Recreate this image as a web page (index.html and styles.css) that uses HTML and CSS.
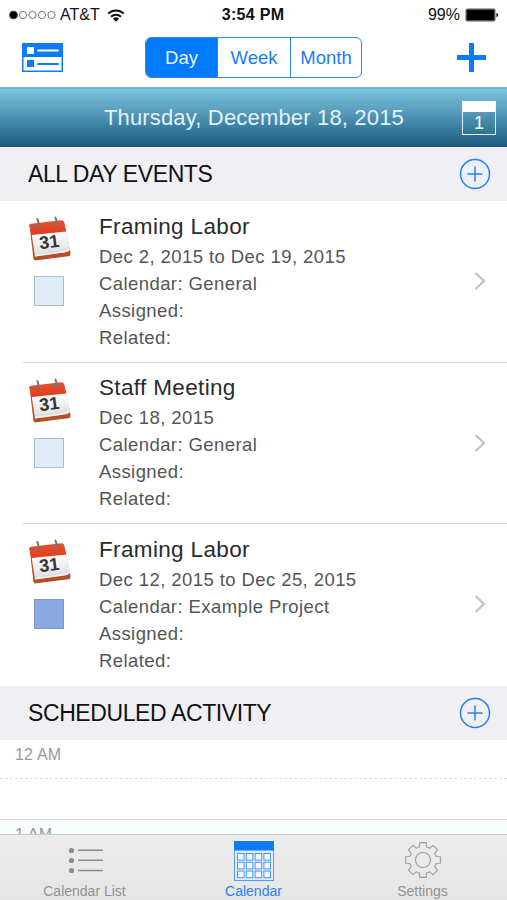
FILE: index.html
```html
<!DOCTYPE html>
<html lang="en">
  <head>
    <meta charset="utf-8">
    <title>Calendar</title>
    <link rel="stylesheet" href="styles.css">
  </head>
  <body>
    <!-- Shared icons -->
    <svg width="0" height="0" aria-hidden="true">
      <defs>
        <linearGradient id="red-top" x1="0" y1="0" x2="0" y2="1">
          <stop offset="0" stop-color="#e5522f" />
          <stop offset="1" stop-color="#dd3c1d" />
        </linearGradient>
        <linearGradient id="paper" x1="0" y1="0" x2="0" y2="1">
          <stop offset="0" stop-color="#ffffff" />
          <stop offset="1" stop-color="#dcdcdc" />
        </linearGradient>
      </defs>
      <symbol id="icon-event" viewBox="0 0 46 46">
        <path d="M1.500 9 L36 5.500 L42.500 37 L42 40 L7 44.500 L5.500 43z" fill="#b84e25" />
        <path d="M1.200 9.500 Q1.500 8 3 7.700 L33 4.300 Q35 4.200 35.500 5.500 L38.500 16 L4.500 19.500z" fill="url(#red-top)" />
        <path d="M3.700 19 L38.300 15.500 L42 33 Q41 36 36 36.500 L7 40.500z" fill="url(#paper)" />
        <path d="M7 36.500 L26 34.500 Q36 33.500 41.500 29.500 L42 34 Q40 36.200 36 36.500 L7 40.500z" fill="#eeeeee" />
        <path d="M7 37.500 Q28 36.500 41 31.500" fill="none" stroke="#c9c9c9" stroke-width="0.700" />
        <path d="M7.500 10 q4 1 3-3 l-1-4 M25.500 8 q4 1 3-3 l-1-3.500" fill="none" stroke="#777" stroke-width="2" stroke-linecap="round" />
        <text class="event-day" x="21.500" y="32" transform="rotate(-7 22 28)">31</text>
      </symbol>
      <symbol id="icon-add" viewBox="0 0 32 32">
        <circle cx="16" cy="16" r="14.500" />
        <path d="M16 8.500v15M8.500 16h15" />
      </symbol>
      <symbol id="icon-chevron" viewBox="0 0 12 20">
        <path d="M1.500 2l8.500 8-8.500 8" />
      </symbol>
    </svg>

    <div class="app">
      <!-- Status bar -->
      <div class="status-bar">
        <div class="carrier">
          <svg class="signal" width="47" height="10" viewBox="0 0 47 10">
            <circle cx="4.500" cy="5" r="4" />
            <circle cx="14" cy="5" r="3.600" />
            <circle cx="23.500" cy="5" r="3.600" />
            <circle cx="33" cy="5" r="3.600" />
            <circle cx="42.500" cy="5" r="3.600" />
          </svg>
          <span class="carrier-name">AT&amp;T</span>
          <svg class="wifi" width="18" height="13" viewBox="0 0 18 13">
            <path d="M1.200 4.600a11.200 11.200 0 0 1 15.600 0M4 7.700a7.200 7.200 0 0 1 10 0" />
            <path class="wifi-dot" d="M9 12.800l-3-3a4.300 4.300 0 0 1 6 0z" />
          </svg>
        </div>
        <div class="time">3:54 PM</div>
        <div class="battery">
          <span>99%</span>
          <svg width="34" height="14" viewBox="0 0 34 14">
            <rect x="0.500" y="0.500" width="30" height="13" rx="2" fill="#555" />
            <rect x="2" y="2" width="27" height="10" rx="1" fill="#000" />
            <path d="M31.300 5v4q2 0 2-2t-2-2z" fill="#222" />
          </svg>
        </div>
      </div>

      <!-- Toolbar -->
      <div class="toolbar">
        <svg width="41" height="30" viewBox="0 0 41 30">
          <rect width="41" height="29" fill="#0a7aff" />
          <rect x="5" y="4" width="7" height="7" fill="#fff" />
          <path d="M16 7.500h20" stroke="#fff" stroke-width="1.800" stroke-linecap="round" />
          <rect x="1.500" y="14" width="38" height="13.500" fill="#fff" />
          <rect x="5" y="17" width="7" height="7" fill="#0a7aff" />
          <path d="M16 21h20" stroke="#0a7aff" stroke-width="1.800" stroke-linecap="round" />
        </svg>
        <div class="segments">
          <div class="segment active">Day</div>
          <div class="segment">Week</div>
          <div class="segment">Month</div>
        </div>
        <svg width="29" height="29" viewBox="0 0 29 29">
          <path d="M14.500 0v29M0 14.500h29" stroke="#0a7aff" stroke-width="5" />
        </svg>
      </div>

      <!-- Current date -->
      <div class="date-bar">
        <span class="date-title">Thursday, December 18, 2015</span>
        <div class="today"><span>1</span></div>
      </div>

      <div class="section-header">
        <h2>ALL DAY EVENTS</h2>
        <svg class="add"><use href="#icon-add" /></svg>
      </div>

      <div class="events">
        <div class="event">
          <div class="event-icons">
            <svg class="event-icon"><use href="#icon-event" /></svg>
            <div class="swatch"></div>
          </div>
          <div class="event-info">
            <h3>Framing Labor</h3>
            <p>Dec 2, 2015 to Dec 19, 2015</p>
            <p>Calendar: General</p>
            <p>Assigned:</p>
            <p>Related:</p>
          </div>
          <svg class="chevron"><use href="#icon-chevron" /></svg>
        </div>
        <div class="event">
          <div class="event-icons">
            <svg class="event-icon"><use href="#icon-event" /></svg>
            <div class="swatch"></div>
          </div>
          <div class="event-info">
            <h3>Staff Meeting</h3>
            <p>Dec 18, 2015</p>
            <p>Calendar: General</p>
            <p>Assigned:</p>
            <p>Related:</p>
          </div>
          <svg class="chevron"><use href="#icon-chevron" /></svg>
        </div>
        <div class="event">
          <div class="event-icons">
            <svg class="event-icon"><use href="#icon-event" /></svg>
            <div class="swatch project"></div>
          </div>
          <div class="event-info">
            <h3>Framing Labor</h3>
            <p>Dec 12, 2015 to Dec 25, 2015</p>
            <p>Calendar: Example Project</p>
            <p>Assigned:</p>
            <p>Related:</p>
          </div>
          <svg class="chevron"><use href="#icon-chevron" /></svg>
        </div>
      </div>

      <div class="section-header">
        <h2>SCHEDULED ACTIVITY</h2>
        <svg class="add"><use href="#icon-add" /></svg>
      </div>

      <!-- Hours, cut off by the tab bar -->
      <div class="schedule">
        <div class="hour">
          <div class="half">12 AM</div>
        </div>
        <div class="hour tinted">
          <div class="half">1 AM</div>
        </div>
      </div>

      <!-- Tab bar -->
      <div class="tab-bar">
        <div class="tab">
          <svg width="36" height="40" viewBox="0 0 36 40">
            <g fill="#8c8c8c">
              <circle cx="4.500" cy="9.500" r="2.600" />
              <circle cx="4.500" cy="19.500" r="2.600" />
              <circle cx="4.500" cy="29.500" r="2.600" />
            </g>
            <path d="M11 9.200h25M11 19.200h25M11 29.400h25" stroke="#8c8c8c" stroke-width="1.500" />
          </svg>
          <span>Calendar List</span>
        </div>
        <div class="tab active">
          <svg width="40" height="40" viewBox="0 0 40 40">
            <rect x="0.500" y="0.500" width="39" height="39" fill="#e3edf8" stroke="#4d9dfa" />
            <rect width="40" height="9.500" fill="#0a7aff" />
            <g id="calendar-cells" fill="#f4f8fc" stroke="#4598fb"></g>
          </svg>
          <span>Calendar</span>
        </div>
        <div class="tab">
          <svg width="38" height="40" viewBox="-19 -19 38 40">
            <g fill="none" stroke="#9c9c9c" stroke-width="1.100" stroke-linejoin="round">
              <path id="gear" />
              <circle r="7.500" />
            </g>
          </svg>
          <span>Settings</span>
        </div>
      </div>
    </div>

    <script>
      const svgNS = "http://www.w3.org/2000/svg"

      // day cells of the calendar tab icon
      const cells = document.getElementById("calendar-cells")
      for (let row = 0; row < 3; row++) {
        for (let col = 0; col < 4; col++) {
          const cell = document.createElementNS(svgNS, "rect")
          cell.setAttribute("x", 3.5 + col * 8.8)
          cell.setAttribute("y", 12.5 + row * 8.8)
          cell.setAttribute("width", 6.6)
          cell.setAttribute("height", 6.6)
          cells.appendChild(cell)
        }
      }

      // gear outline: eight teeth, one every 45 degrees
      const tooth = [[-3.5, 13.2], [-3.2, 17.4], [3.2, 17.4], [3.5, 13.2]]
      const points = []
      for (let i = 0; i < 8; i++) {
        const angle = (i * Math.PI) / 4
        tooth.forEach(([x, y]) => {
          const px = x * Math.cos(angle) + y * Math.sin(angle)
          const py = x * Math.sin(angle) - y * Math.cos(angle)
          points.push(`${px.toFixed(2)} ${py.toFixed(2)}`)
        })
      }
      document.getElementById("gear").setAttribute("d", `M${points.join("L")}z`)
    </script>
  </body>
</html>
```
FILE: styles.css
```css
* {
  box-sizing: border-box;
}
body {
  margin: 0;
  font-family: "Liberation Sans", Arial, sans-serif;
  background: #fff;
}
h2,
h3,
p {
  margin: 0;
  font-weight: normal;
}
svg {
  display: block;
  flex-shrink: 0;
}
.app {
  display: flex;
  flex-direction: column;
  width: 507px;
  height: 900px;
  overflow: hidden;
}

/* Status bar */
.status-bar {
  display: grid;
  grid-template-columns: 1fr auto 1fr;
  align-items: center;
  height: 30px;
  padding: 0 8px 0 9px;
  font-size: 16px;
  line-height: 30px;
  color: #111;
}
.carrier {
  display: flex;
  align-items: center;
}
.signal circle {
  stroke: #555;
  stroke-width: 0.8;
  fill: none;
}
.signal circle:first-child {
  fill: #000;
}
.carrier-name {
  margin-left: 4px;
}
.wifi {
  margin-left: 7px;
  fill: none;
  stroke: #111;
  stroke-width: 2;
}
.wifi-dot {
  fill: #111;
  stroke: none;
}
.time {
  font-weight: bold;
  letter-spacing: 0.3px;
  margin-right: 2px;
}
.battery {
  display: flex;
  align-items: center;
  justify-content: flex-end;
  gap: 5px;
}

/* Toolbar */
.toolbar {
  display: flex;
  align-items: center;
  height: 57px;
  padding: 0 21px 2px 22px;
}
.segments {
  display: grid;
  grid-template-columns: 71px 73px 71px;
  height: 41px;
  margin: 0 auto 0 82px;
  border: 1.5px solid #2b87f5;
  border-radius: 6px;
  overflow: hidden;
  font-size: 18.5px;
  line-height: 40px;
  text-align: center;
  color: #1c7df5;
}
.segment + .segment {
  border-left: 1px solid #2b87f5;
}
.segment.active {
  background: #007aff;
  color: #e8f3ff;
}

/* Date */
.date-bar {
  display: flex;
  align-items: center;
  justify-content: flex-end;
  height: 60px;
  padding-right: 11px;
  border-top: 2px solid #6fb5d0;
  background: linear-gradient(#7dc4e0, #5ba0bf 35%, #367a9d 70%, #1f5a7c);
}
.date-title {
  margin-right: 58px;
  font-size: 22px;
  letter-spacing: 0.17px;
  color: #e3f2f8;
}
.today {
  width: 34px;
  height: 34px;
  border: 1.5px solid #e4eef3;
  border-top: 11px solid #fff;
  font-size: 18px;
  line-height: 22px;
  text-align: center;
  color: #fff;
}

/* Sections */
.section-header {
  display: flex;
  align-items: center;
  justify-content: space-between;
  height: 54px;
  padding: 0 16px 0 28px;
  background: #efeff4;
}
.section-header h2 {
  font-size: 23px;
  letter-spacing: -0.4px;
  color: #111;
}
.add {
  width: 32px;
  height: 32px;
  fill: none;
  stroke: #2182f7;
  stroke-width: 1.5;
}

/* Events */
.events {
  display: grid;
  grid-template-rows: repeat(3, 1fr);
  height: 485px;
}
.event {
  display: flex;
  margin-left: 23px;
  border-bottom: 1px solid #d5d5d8;
}
.event:last-child {
  border-bottom: none;
}
.event-icons {
  width: 76px;
  padding: 15px 0 0 5px;
}
.event-icon {
  width: 46px;
  height: 46px;
}
.event-day {
  font-size: 18px;
  font-weight: bold;
  text-anchor: middle;
  fill: #333;
}
.swatch {
  width: 30px;
  height: 30px;
  margin: 14px 0 0 6px;
  border: 1px solid #a9bfcc;
  background: #dfebf6;
}
.swatch.project {
  border-color: #7d96c9;
  background: #8ba8e0;
}
.event-info {
  flex: 1;
  padding-top: 9.5px;
}
.event-info h3 {
  font-size: 22.5px;
  line-height: 32px;
  letter-spacing: 0.35px;
  color: #2b2b2b;
}
.event-info p {
  font-size: 18.5px;
  line-height: 27px;
  letter-spacing: 0.42px;
  color: #555;
}
.chevron {
  width: 12px;
  height: 20px;
  margin: 70px 21px 0 0;
  fill: none;
  stroke: #c4c4c8;
  stroke-width: 2.4;
}

/* Schedule */
.schedule {
  flex: 1;
  min-height: 0;
  overflow: hidden;
}
.hour {
  height: 80px;
  border-bottom: 1px solid #d5dde0;
}
.half {
  height: 39px;
  padding: 5px 0 0 15px;
  border-bottom: 1px dashed #dedede;
  font-size: 16px;
  line-height: 20px;
  letter-spacing: 0.2px;
  color: #999;
}
.hour.tinted {
  background: #f8fdfe;
}

/* Tab bar */
.tab-bar {
  display: grid;
  grid-template-columns: repeat(3, 1fr);
  height: 66px;
  border-top: 1px solid #c8c8c8;
  background: linear-gradient(#ececec, #e6e6e6);
}
.tab {
  display: flex;
  flex-direction: column;
  align-items: center;
  padding-top: 6px;
  font-size: 14px;
  line-height: 20px;
  color: #929292;
}
.tab.active {
  color: #2584f8;
}
```
